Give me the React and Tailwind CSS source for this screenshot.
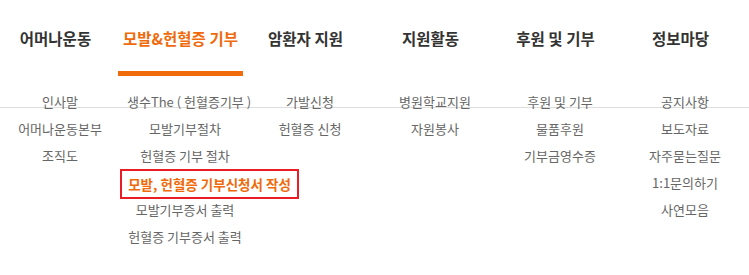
import React from 'react';

const menus = [
  { title: '어머나운동', items: ['인사말', '어머나운동본부', '조직도'] },
  {
    title: '모발&헌혈증 기부',
    active: true,
    items: ['생수The ( 헌혈증기부 )', '모발기부절차', '헌혈증 기부 절차', '모발, 헌혈증 기부신청서 작성', '모발기부증서 출력', '헌혈증 기부증서 출력'],
  },
  { title: '암환자 지원', items: ['가발신청', '헌혈증 신청'] },
  { title: '지원활동', items: ['병원학교지원', '자원봉사'] },
  { title: '후원 및 기부', items: ['후원 및 기부', '물품후원', '기부금영수증'] },
  { title: '정보마당', items: ['공지사항', '보도자료', '자주묻는질문', '1:1문의하기', '사연모음'] },
];

export default function App() {
  return (
    <div
      className="relative w-[749px] h-[275px] overflow-hidden bg-white"
      style={{ fontFamily: '"Noto Sans CJK KR", "Noto Sans", sans-serif' }}
    >
      {/* header bottom line, sits behind the first row of the dropdown */}
      <div className="absolute left-0 right-0 top-[107px] h-px bg-[#dddddd]" />

      <nav className="relative flex w-[750px] -ml-[7px]">
        {menus.map((m) => (
          <div key={m.title} className="w-[125px] shrink-0">
            <div className="h-[71px] pt-[28px] text-center leading-[20px]">
              <span
                className={
                  'text-[15.5px] font-bold whitespace-nowrap ' +
                  (m.active ? 'text-[#f06a0c]' : 'text-[#333333]')
                }
              >
                {m.title}
              </span>
            </div>
            <div className={'h-[5px] ' + (m.active ? 'bg-[#f26b0b]' : '')} />
            <ul className="pt-[16px] pl-[9px] text-center">
              {m.items.map((it) =>
                it.startsWith('모발, 헌혈증') ? (
                  <li key={it} className="h-[27px] flex justify-start -ml-[7px]">
                    <span className="shrink-0 w-[179px] h-[30px] -mt-[4px] border-2 border-[#ec1c24] flex items-center justify-center text-[13.5px] font-bold text-[#f06a0c] whitespace-nowrap">
                      {it}
                    </span>
                  </li>
                ) : (
                  <li key={it} className="h-[27px] leading-[20px] text-[13px] text-[#666666] whitespace-nowrap">
                    {it}
                  </li>
                )
              )}
            </ul>
          </div>
        ))}
      </nav>
    </div>
  );
}
